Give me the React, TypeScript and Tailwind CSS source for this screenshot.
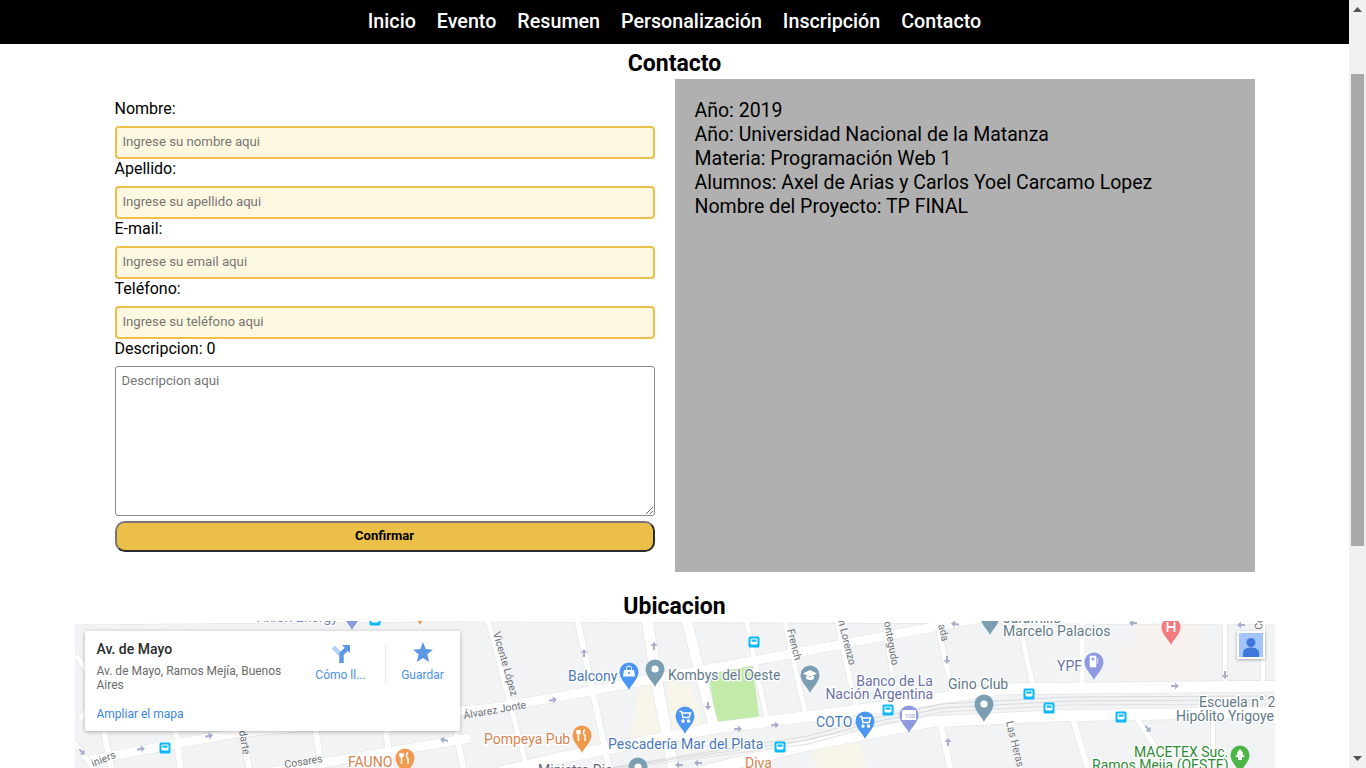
import { ReactNode } from "react";

const font = "font-['Roboto',sans-serif]";

const navItems = ["Inicio", "Evento", "Resumen", "Personalización", "Inscripción", "Contacto"];

const fields = [
  { label: "Nombre:", placeholder: "Ingrese su nombre aqui" },
  { label: "Apellido:", placeholder: "Ingrese su apellido aqui" },
  { label: "E-mail:", placeholder: "Ingrese su email aqui" },
  { label: "Teléfono:", placeholder: "Ingrese su teléfono aqui" },
];

const info = [
  "Año: 2019",
  "Año: Universidad Nacional de la Matanza",
  "Materia: Programación Web 1",
  "Alumnos: Axel de Arias y Carlos Yoel Carcamo Lopez",
  "Nombre del Proyecto: TP FINAL",
];

// streets of the map, in page coordinates: [width, points]
const streets: [number, string][] = [
  [9, "90,760 235,733 492,708 552,698 648,680 752,661 955,623 1010,612"],
  [9, "270,772 470,738"],
  [11, "1290,686 1000,689 875,708 715,728 560,758 500,772"],
  [11, "1290,712 1050,716 930,722 808,745 700,772"],
  [5, "76,655 100,690 80,720"],
  [5, "72,740 94,768"],
  [6, "103,725 112,772"],
  [6, "175,725 181,772"],
  [6, "240,725 250,772"],
  [6, "315,725 322,772"],
  [6, "385,725 392,772"],
  [6, "455,725 464,772"],
  [5, "488,620 528,772"],
  [6, "577,618 610,772"],
  [11, "647,618 657,683 674,772"],
  [10, "686,618 714,728"],
  [5, "746,618 768,725"],
  [5, "784,618 806,716"],
  [5, "836,618 856,706"],
  [4, "884,618 895,695"],
  [5, "936,618 953,695"],
  [5, "1018,618 1034,690"],
  [5, "1082,618 1082,690"],
  [4, "1225,618 1225,690"],
  [4, "1263,618 1263,690"],
  [6, "940,722 951,772"],
  [6, "1008,718 1021,772"],
  [6, "1072,716 1089,772"],
  [5, "1135,716 1172,772"],
  [4, "1213,714 1213,772"],
  [5, "75,622 460,619 1275,622"],
];

const arrows: [number, number, number][] = [
  [141, 749, -10], [209, 736, -10], [444, 740, 190], [82, 752, 45], [553, 700, -10], [584, 653, -90], [654, 646, -90],
  [708, 706, 90], [738, 729, -5], [775, 725, -5], [955, 624, 190], [947, 660, 90], [1133, 623, 180],
  [1175, 686, 0], [1225, 675, 90], [1241, 625, 180], [948, 742, -90], [1148, 729, 50], [679, 765, 180], [698, 763, 180],
];

const buses: [number, number][] = [
  [165, 748], [375, 620], [754, 642], [780, 747], [888, 710], [1029, 694], [1049, 708], [1121, 717],
];

function Street({ x, y, angle, text }: { x: number; y: number; angle: number; text: string }) {
  return (
    <text x={x} y={y} transform={`rotate(${angle} ${x} ${y})`} fontSize="10.5" fill="#6f7378">
      {text}
    </text>
  );
}

function Pin({ x, y, color, children }: { x: number; y: number; color: string; children?: ReactNode }) {
  return (
    <g transform={`translate(${x} ${y})`}>
      <path d="M0 18C-2 13-9.500 7-9.500 0A9.500 9.500 0 1 1 9.500 0C9.500 7 2 13 0 18Z" fill={color} />
      {children ?? <circle r="3.600" fill="#fff" />}
    </g>
  );
}

function Label({ x, y, color, anchor, children }: { x: number; y: number; color: string; anchor?: "end"; children: string }) {
  return (
    <text x={x} y={y} fontSize="14" fill={color} textAnchor={anchor} stroke="#fff" strokeWidth="2.500" paintOrder="stroke">
      {children}
    </text>
  );
}

const cart = <path d="M-5.500-4.500h2l1.500 6h6l1.500-4.500h-8.500M-2 4a1 1 0 1 0 .01 0M3.500 4a1 1 0 1 0 .01 0" fill="none" stroke="#fff" strokeWidth="1.500" />;
const fork = <path d="M-3.500-5v4M-5-5v3c0 1 3 1 3 0v-3M-3.500-1v7M3-5.500c-2 1-2 5 0 6v5.500" fill="none" stroke="#fff" strokeWidth="1.500" />;

function MapDrawing() {
  return (
    <svg width="1200" height="147" viewBox="75 621 1200 147" className={`block ${font}`}>
      <rect x="75" y="621" width="1200" height="147" fill="#f1f3f4" />
      <polygon points="640,683 653,681 668,738 628,748" fill="#f8f5ea" />
      <polygon points="665,680 692,685 705,733 675,737" fill="#f8f5ea" />
      <polygon points="585,748 603,738 612,748 590,756" fill="#f8f5ea" />
      <polygon points="812,748 860,742 866,768 816,768" fill="#f8f5ea" />
      <polygon points="708,672 752,663 760,722 717,725" fill="#c2ebaa" />
      <polygon points="1135,625 1202,625 1200,680 1121,680 1121,647 1135,647" fill="#f7f1ef" />
      {streets.map(([w, points]) => (
        <polyline key={points} points={points} fill="none" stroke="#e2e3e6" strokeWidth={w + 1.2} />
      ))}
      {streets.map(([w, points]) => (
        <polyline key={points} points={points} fill="none" stroke="#fff" strokeWidth={w} />
      ))}
      {/* railway */}
      <polyline points="608,768 808,736 875,718 942,704 1070,697 1275,696" fill="none" stroke="#d9dadc" strokeWidth="1" />
      <polyline points="612,768 808,740 875,722 942,708 1070,701 1275,700" fill="none" stroke="#d9dadc" strokeWidth="1" />
      <polyline points="620,768 808,744 875,726 942,712 1070,705 1275,704" fill="none" stroke="#e0e1e3" strokeWidth="1" />
      {arrows.map(([x, y, a]) => (
        <path key={`${x}-${y}`} transform={`translate(${x} ${y}) rotate(${a})`} d="M-4-1h4v-2.500l4 3.500-4 3.500v-2.500h-4z" fill="#a9aec9" />
      ))}
      {buses.map(([x, y]) => (
        <g key={`${x}-${y}`} transform={`translate(${x} ${y})`}>
          <rect x="-5.500" y="-5.500" width="11" height="11" rx="1.500" fill="#0db8fb" />
          <rect x="-3.500" y="-3.500" width="7" height="6" rx="1" fill="#fff" />
          <rect x="-2.500" y="-2.500" width="5" height="2.200" fill="#0db8fb" />
        </g>
      ))}

      <Street x={493} y={633} angle={74} text="Vicente López" />
      <Street x={464} y={719} angle={-10} text="Álvarez Jonte" />
      <Street x={239} y={731} angle={80} text="darte" />
      <Street x={93} y={767} angle={-22} text="iniers" />
      <Street x={285} y={768} angle={-9} text="Cosares" />
      <Street x={787} y={630} angle={76} text="French" />
      <Street x={838} y={621} angle={76} text="n Lorenzo" />
      <Street x={884} y={622} angle={80} text="ontegudo" />
      <Street x={938} y={625} angle={76} text="ada" />
      <Street x={1006} y={722} angle={76} text="Las Heras" />
      <Street x={1262} y={630} angle={-85} text="Co" />

      <Label x={257} y={622} color="#7a80b8">Axion Energy</Label>
      <Label x={568} y={681} color="#4a79b8">Balcony</Label>
      <Label x={668} y={680} color="#5f7a8a">Kombys del Oeste</Label>
      <Label x={484} y={744} color="#d8824f">Pompeya Pub</Label>
      <Label x={608} y={749} color="#4a79b8">Pescadería Mar del Plata</Label>
      <Label x={745} y={768} color="#d8824f">Diva</Label>
      <Label x={538} y={775} color="#5f6a78">Ministro Dia</Label>
      <Label x={348} y={767} color="#d8824f">FAUNO</Label>
      <Label x={816} y={727} color="#4a79b8">COTO</Label>
      <Label x={933} y={686} color="#6b72a8" anchor="end">Banco de La</Label>
      <Label x={933} y={699} color="#6b72a8" anchor="end">Nación Argentina</Label>
      <Label x={948} y={689} color="#5f7a8a">Gino Club</Label>
      <Label x={1003} y={623} color="#5f7a8a">Jaramillo</Label>
      <Label x={1003} y={636} color="#5f7a8a">Marcelo Palacios</Label>
      <Label x={1057} y={671} color="#6b72a8">YPF</Label>
      <Label x={1199} y={707} color="#5f7a8a">Escuela n° 2</Label>
      <Label x={1176} y={721} color="#5f7a8a">Hipólito Yrigoyen</Label>
      <Label x={1134} y={757} color="#2e8b36">MACETEX Suc.</Label>
      <Label x={1092} y={770} color="#2e8b36">Ramos Mejia (OESTE)</Label>

      <Pin x={352} y={612} color="#8e9be0" />
      <Pin x={420} y={607} color="#f19a4f" />
      <Pin x={629} y={672} color="#4b96f3">
        <path d="M-5-2h10l1 6.500h-12z" fill="#fff" />
        <path d="M-2.500-2v-1.500a2.500 2.500 0 0 1 5 0v1.500" fill="none" stroke="#fff" strokeWidth="1" />
        <circle cy="1" r="1" fill="#4b96f3" />
      </Pin>
      <Pin x={655} y={669} color="#7b9eb3" />
      <Pin x={685} y={716} color="#4b96f3">{cart}</Pin>
      <Pin x={810} y={675} color="#7b9eb3">
        <path d="M0-5l7 3.500-7 3.500-7-3.500zM-4 1v2.500c2 2 6 2 8 0v-2.500" fill="#fff" />
      </Pin>
      <Pin x={865} y={721} color="#4b96f3">{cart}</Pin>
      <Pin x={582} y={735} color="#f19a4f">{fork}</Pin>
      <Pin x={405} y={758} color="#f19a4f">{fork}</Pin>
      <Pin x={638} y={767} color="#7b9eb3" />
      <Pin x={990} y={617} color="#7b9eb3" />
      <Pin x={1171} y={627} color="#f27b7f">
        <path d="M-3.500-5v10M3.500-5v10M-3.500 0h7" stroke="#fff" strokeWidth="1.800" fill="none" />
      </Pin>
      <Pin x={1094} y={662} color="#8e9be0">
        <path d="M-4-6h6v11h-6zM-2.500-4.500v3h3v-3zM3.500-4v6" fill="#fff" fillRule="evenodd" stroke="#fff" strokeWidth=".6" />
      </Pin>
      <Pin x={909} y={715} color="#8e9be0">
        <rect x="-7" y="-5" width="14" height="10" fill="#fff" />
        <text x="1" y="3" fontSize="6" textAnchor="middle" fill="#8e9be0">100</text>
      </Pin>
      <Pin x={984} y={704} color="#7b9eb3" />
      <Pin x={1240} y={755} color="#4db546">
        <path d="M0-6l3.500 4.500h-1.500l3 3.500h-3v3h-4v-3h-3l3-3.500h-1.500z" fill="#fff" />
      </Pin>
    </svg>
  );
}

function MapCard() {
  return (
    <div className={`absolute left-[10px] top-[10px] flex h-[100px] w-[375px] rounded-[2px] bg-white shadow-[0_1px_4px_rgba(0,0,0,0.3)] ${font}`}>
      <div className="flex w-[200px] flex-col pl-3 pt-[9px]">
        <p className="text-[14px] font-medium leading-[18px] text-[#2b2b2b]">Av. de Mayo</p>
        <p className="mt-[6px] w-[190px] text-[12px] leading-[14px] text-[#6a6a6a]">Av. de Mayo, Ramos Mejía, Buenos Aires</p>
        <a className="mt-[14px] text-[12px] leading-[16px] text-[#3a84df]">Ampliar el mapa</a>
      </div>
      <div className="ml-[19px] mr-[7px] flex w-[74px] flex-col items-center pt-[14px]">
        <svg width="18" height="18" viewBox="0 0 18 18">
          <path d="M1.500 2l6.500 7" fill="none" stroke="#b5d0f5" strokeWidth="4.500" />
          <path d="M9.500 18V9l5-5" fill="none" stroke="#5e97e6" strokeWidth="4.500" />
          <path d="M10 0h8v8z" fill="#5e97e6" />
        </svg>
        <span className="mt-[3px] text-[12px] leading-[18px] text-[#4d8fe5]">Cómo ll...</span>
      </div>
      <div className="mt-[14px] h-[38px] w-px bg-[#ececec]" />
      <div className="flex w-[74px] flex-col items-center pt-[11px]">
        <svg width="20" height="20" viewBox="0 0 22 22">
          <path d="M11 0l3 7.800 8 .6-6.200 5.200 2 8.400L11 17.500 4.200 22l2-8.400L0 8.400l8-.6z" fill="#5e97e6" />
        </svg>
        <span className="mt-[4px] text-[12px] leading-[18px] text-[#4d8fe5]">Guardar</span>
      </div>
    </div>
  );
}

function PersonButton() {
  return (
    <div className="absolute right-[10px] top-[10px] flex h-[28px] w-[28px] items-center justify-center bg-white shadow-[0_1px_3px_rgba(0,0,0,0.3)]">
      <svg width="24" height="24" viewBox="0 0 24 24">
        <rect width="24" height="24" fill="#a4c5fb" />
        <circle cx="12" cy="9.500" r="4.500" fill="#3f77dc" />
        <path d="M4 24v-4c0-4 4-5.500 8-5.500s8 1.500 8 5.500v4z" fill="#3f77dc" />
      </svg>
    </div>
  );
}

function Scrollbar() {
  return (
    <aside className="flex h-full w-[17px] shrink-0 flex-col items-center bg-[#f1f1f1]">
      <svg width="9" height="6" viewBox="0 0 9 6" className="mt-[7px]">
        <path d="M4.500 0l4.500 5H0z" fill="#505050" />
      </svg>
      <div className="mt-[61px] h-[472px] w-[13px] bg-[#a8a8a8]" />
      <svg width="9" height="6" viewBox="0 0 9 6" className="mt-auto mb-[7px]">
        <path d="M4.500 6L0 1h9z" fill="#505050" />
      </svg>
    </aside>
  );
}

export default function App() {
  return (
    <div className={`flex h-screen w-full overflow-hidden bg-white text-black ${font}`}>
      <main className="min-w-0 flex-1">
        <nav className="flex h-[44px] items-center justify-center gap-[21px] bg-black pb-[1px] text-[19.7px] font-medium text-white">
          {navItems.map((item) => (
            <a key={item}>{item}</a>
          ))}
        </nav>
        <h2 className="flex h-[35px] items-center justify-center pt-[6px] text-[23px] font-bold">Contacto</h2>
        <section className="mx-auto flex h-[493px] w-[1200px] pl-10">
          <form className="w-[540px] pt-5 text-[16px]">
            {fields.map((field) => (
              <div key={field.label}>
                <label className="block h-[18px] leading-[20px]">{field.label}</label>
                <input
                  placeholder={field.placeholder}
                  className="mt-[9px] block h-[33px] w-full rounded-[4px] border-2 border-[#ecc04b] bg-[#fff8e0] px-[6px] pb-[2px] text-[13.2px] placeholder:text-[#757575]"
                />
              </div>
            ))}
            <label className="block h-[18px] leading-[20px]">Descripcion: 0</label>
            <textarea
              placeholder="Descripcion aqui"
              className="mt-[9px] block h-[150px] w-full rounded-[3px] border border-[#8a8a8a] px-[6px] py-[4px] text-[13.2px] placeholder:text-[#757575]"
            />
            <button
              type="button"
              className="mt-[5px] block h-[31px] w-full rounded-[10px] border-2 border-t-[#767676] border-r-[#2b2b2b] border-b-[#2b2b2b] border-l-[#767676] bg-[#ebbf48] pb-[2px] text-[13px] font-bold"
            >
              Confirmar
            </button>
          </form>
          <div className="ml-5 h-full w-[580px] bg-[#b0b0b0] px-5 pt-5 text-[19.5px] leading-[24px]">
            {info.map((line) => (
              <p key={line}>{line}</p>
            ))}
          </div>
        </section>
        <h2 className="flex h-[49px] items-center justify-center pt-[21px] text-[23px] font-bold">Ubicacion</h2>
        <div className="relative mx-auto h-[147px] w-[1200px] overflow-hidden">
          <MapDrawing />
          <MapCard />
          <PersonButton />
        </div>
      </main>
      <Scrollbar />
    </div>
  );
}
